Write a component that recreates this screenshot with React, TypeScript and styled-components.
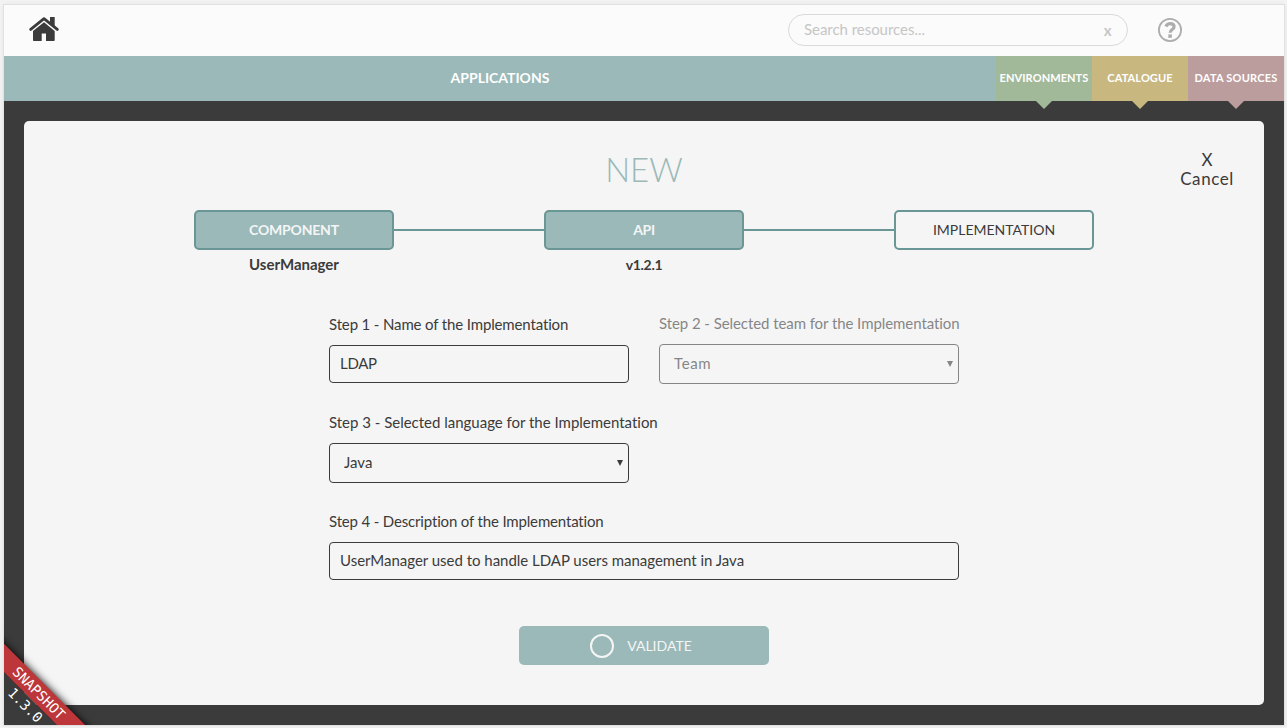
import React from "react";
import styled, { createGlobalStyle, css } from "styled-components";

const teal = "#9ab9b8";
const tealDark = "#6a9695";
const dark = "#3b3b3b";
const paper = "#f5f5f5";

const GlobalStyle = createGlobalStyle`
  * { box-sizing: border-box; }
  body { margin: 0; background: #f3f3f3; font-family: Lato, "Open Sans", sans-serif; font-variant-ligatures: none; color: ${dark}; }
`;

const Page = styled.div`
  height: 728px;
  padding: 5px 3px 3px 4px;
  overflow: hidden;
`;

const Frame = styled.div`
  position: relative;
  display: flex;
  flex-direction: column;
  width: 1280px;
  height: 720px;
  background: #fbfbfb;
  box-shadow: 0 0 0 1px #e1e1e1, 0 0 6px rgba(0, 0, 0, 0.08);
`;

const Header = styled.header`
  display: flex;
  align-items: center;
  flex: 0 0 51px;
  padding: 0 102px 0 25px;
`;

const HomeIcon = styled.svg`
  width: 30px;
  height: 25px;
  margin: 0 auto 3px 0;
  fill: ${dark};
`;

const Search = styled.div`
  display: flex;
  align-items: center;
  justify-content: space-between;
  width: 340px;
  height: 32px;
  margin: 0 30px 1px 0;
  padding: 0 15px;
  border: 1px solid #dadada;
  border-radius: 16px;
  color: #c6c6c6;
`;

const Text = styled.span<{ $size?: number; $weight?: number; $spacing?: number; $line?: number }>`
  font-size: ${(p) => p.$size ?? 14}px;
  font-weight: ${(p) => p.$weight ?? 400};
  letter-spacing: ${(p) => p.$spacing ?? 0}px;
  line-height: ${(p) => p.$line ?? 18}px;
  white-space: nowrap;
`;

const BodyText = styled(Text).attrs({ $size: 15, $line: 16 })`
  margin-bottom: 2px;
`;

const HelpIcon = styled.svg`
  width: 24px;
  height: 24px;
  margin-bottom: 1px;
`;

const Nav = styled.nav`
  display: flex;
  flex: 0 0 45px;
`;

const MainTab = styled.div`
  display: flex;
  align-items: center;
  justify-content: center;
  flex: 1;
  padding-bottom: 2px;
  background: ${teal};
  color: #fff;
`;

const SideTab = styled.div<{ $color: string }>`
  position: relative;
  display: flex;
  align-items: center;
  justify-content: center;
  width: 96px;
  padding-bottom: 2px;
  background: ${(p) => p.$color};
  color: #fff;

  &::after {
    content: "";
    position: absolute;
    top: 100%;
    left: 40px;
    border: 8px solid transparent;
    border-top-color: ${(p) => p.$color};
    border-bottom: 0;
  }
`;

const Stage = styled.main`
  flex: 1;
  padding: 20px;
  background: ${dark};
`;

const Card = styled.section`
  position: relative;
  display: flex;
  flex-direction: column;
  align-items: center;
  height: 584px;
  padding-top: 25px;
  border-radius: 5px;
  background: ${paper};
`;

const Title = styled.h1`
  margin: 0;
  color: ${teal};
  font-size: 33px;
  font-weight: 300;
  line-height: 46px;
  letter-spacing: 0;
`;

const Cancel = styled.button`
  position: absolute;
  top: 29px;
  right: 30px;
  display: flex;
  flex-direction: column;
  align-items: center;
  padding: 0;
  border: 0;
  background: none;
  color: ${dark};
  font-family: inherit;
`;

const Steps = styled.div`
  display: flex;
  align-items: flex-start;
  margin-top: 18px;
`;

const Step = styled.div`
  display: flex;
  flex-direction: column;
  align-items: center;
  gap: 6px;
  width: 200px;
  height: 64px;
`;

const StepBox = styled.div<{ $done?: boolean }>`
  display: flex;
  align-items: center;
  justify-content: center;
  width: 200px;
  height: 40px;
  border: 2px solid ${tealDark};
  border-radius: 5px;
  ${(p) => p.$done && css`background: ${teal}; color: ${paper};`}
`;

const Link = styled.div`
  width: 150px;
  height: 2px;
  margin-top: 19px;
  background: ${tealDark};
`;

const Form = styled.form`
  display: grid;
  grid-template-columns: 300px 300px;
  column-gap: 30px;
  width: 630px;
  margin-top: 41px;
`;

const Field = styled.label<{ $wide?: boolean; $muted?: boolean; $top?: number }>`
  display: flex;
  flex-direction: column;
  gap: 11px;
  margin-top: ${(p) => p.$top ?? 0}px;
  ${(p) => p.$wide && css`grid-column: 1 / -1;`}
  ${(p) => p.$muted && css`opacity: 0.6;`}
`;

const Box = styled.div<{ $select?: boolean }>`
  display: flex;
  align-items: center;
  justify-content: space-between;
  width: ${(p) => (p.$select ? "300px" : "100%")};
  height: ${(p) => (p.$select ? 40 : 38)}px;
  padding: ${(p) => (p.$select ? "0 5px 0 14px" : "0 10px")};
  border: 1px solid ${dark};
  border-radius: 4px;
`;

const Arrow = styled.i`
  border: 3px solid transparent;
  border-top: 6px solid ${dark};
  border-bottom: 0;
`;

const Validate = styled.button`
  display: flex;
  align-items: center;
  justify-content: center;
  gap: 13px;
  width: 250px;
  height: 39px;
  margin-top: 46px;
  padding: 0 6px 0 0;
  border: 0;
  border-radius: 5px;
  background: ${teal};
  color: ${paper};
  font-family: inherit;
`;

const Ring = styled.span`
  width: 24px;
  height: 24px;
  border: 2px solid ${paper};
  border-radius: 50%;
`;

const Corner = styled.div`
  position: absolute;
  left: 0;
  bottom: 0;
  width: 110px;
  height: 110px;
  overflow: hidden;
  color: #fff;
  font-family: "DejaVu Sans Mono", monospace;
  font-size: 14px;
  line-height: 20px;
  text-align: center;
`;

const Ribbon = styled.div`
  position: absolute;
  left: -45px;
  top: 68px;
  width: 160px;
  height: 20px;
  transform: rotate(45deg);
  background: #bd3639;
  box-shadow: 0 0 8px #000;
`;

const Version = styled.div`
  position: absolute;
  left: -59px;
  top: 81.5px;
  width: 160px;
  height: 17px;
  line-height: 17px;
  transform: rotate(45deg);
  background: ${dark};
`;

export default function App() {
  return (
    <Page>
      <GlobalStyle />
      <Frame>
        <Header>
          <HomeIcon viewBox="0 0 30 25">
            <path d="M15 5.200 4 14v9.200q0 .8.8.8h7.900v-7.500h4.300V24h7.900q.8 0 .8-.8V14z" />
            <path d="M1.700 12.400 15 1.700l13.300 10.700" fill="none" stroke={dark} strokeWidth="2.800" strokeLinecap="round" strokeLinejoin="round" />
            <path d="M21 0h4.700v10L21 6z" />
          </HomeIcon>
          <Search>
            <BodyText $spacing={-0.04}>Search resources...</BodyText>
            <Text $size={15} $weight={700} $line={16} $spacing={0.5}>x</Text>
          </Search>
          <HelpIcon viewBox="0 0 24 24" fill="none" stroke="#adadad">
            <circle cx="12" cy="12" r="11.100" strokeWidth="1.800" />
            <path d="M7.800 8.400C8.800 6.500 10.200 5.600 12.200 5.600c2.400 0 3.900 1.300 3.900 3.100 0 2.900-4 2.800-4 6.100" strokeWidth="3.200" />
            <path d="M12.100 16.400v3.400" strokeWidth="3.600" />
          </HelpIcon>
        </Header>
        <Nav>
          <MainTab><Text $weight={700}>APPLICATIONS</Text></MainTab>
          <SideTab $color="#a2b999"><Text $size={11} $weight={700} $spacing={0.08}>ENVIRONMENTS</Text></SideTab>
          <SideTab $color="#c9b780"><Text $size={11} $weight={700} $spacing={0.1}>CATALOGUE</Text></SideTab>
          <SideTab $color="#bc9d9d"><Text $size={11} $weight={700} $spacing={0.22}>DATA SOURCES</Text></SideTab>
        </Nav>
        <Stage>
          <Card>
            <Title>NEW</Title>
            <Cancel>
              <Text $size={17} $line={19}>X</Text>
              <Text $size={17} $line={19} $spacing={0.6}>Cancel</Text>
            </Cancel>
            <Steps>
              <Step>
                <StepBox $done><Text $weight={700} $spacing={-0.2}>COMPONENT</Text></StepBox>
                <BodyText $weight={700}>UserManager</BodyText>
              </Step>
              <Link />
              <Step>
                <StepBox $done><Text $weight={700} $spacing={-0.3}>API</Text></StepBox>
                <Text $weight={700} $spacing={-0.3}>v1.2.1</Text>
              </Step>
              <Link />
              <Step>
                <StepBox><Text>IMPLEMENTATION</Text></StepBox>
              </Step>
            </Steps>
            <Form>
              <Field $top={1}>
                <BodyText $spacing={-0.14}>Step 1 - Name of the Implementation</BodyText>
                <Box><BodyText $spacing={-0.3}>LDAP</BodyText></Box>
              </Field>
              <Field $muted>
                <BodyText $spacing={-0.07}>Step 2 - Selected team for the Implementation</BodyText>
                <Box $select><BodyText $spacing={0.6}>Team</BodyText><Arrow /></Box>
              </Field>
              <Field $top={30} $wide>
                <BodyText $spacing={-0.01}>Step 3 - Selected language for the Implementation</BodyText>
                <Box $select><BodyText>Java</BodyText><Arrow /></Box>
              </Field>
              <Field $top={30} $wide>
                <BodyText $spacing={-0.16}>Step 4 - Description of the Implementation</BodyText>
                <Box><BodyText $spacing={-0.02}>UserManager used to handle LDAP users management in Java</BodyText></Box>
              </Field>
            </Form>
            <Validate type="button">
              <Ring />
              <Text $line={20}>VALIDATE</Text>
            </Validate>
          </Card>
        </Stage>
        <Corner>
          <Ribbon>SNAPSHOT</Ribbon>
          <Version>1.3.0</Version>
        </Corner>
      </Frame>
    </Page>
  );
}
